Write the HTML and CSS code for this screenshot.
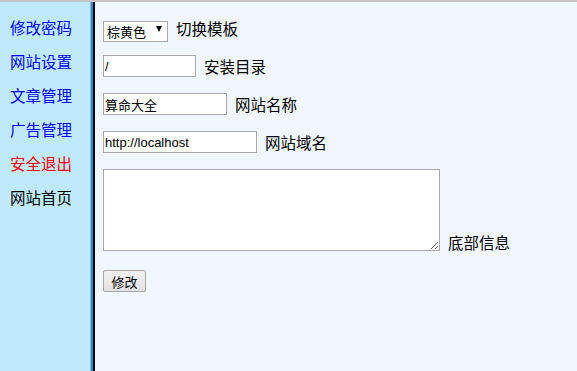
FILE: index.html
```html
<!DOCTYPE html>
<html>
<head>
<meta charset="utf-8">
<link rel="stylesheet" href="styles.css">
</head>
<body>
<div class="topline"></div>
<div class="wrap">
  <div class="side">
    <a class="nav">修改密码</a>
    <a class="nav">网站设置</a>
    <a class="nav">文章管理</a>
    <a class="nav">广告管理</a>
    <a class="nav red">安全退出</a>
    <a class="nav black">网站首页</a>
  </div>
  <div class="sep"><div class="sep-gray"></div><div class="sep-blue"></div><div class="sep-black"></div></div>
  <div class="main">
    <div class="row">
      <span class="selwrap"><select class="sel"><option>棕黄色</option></select></span>
      <span class="label">切换模板</span>
    </div>
    <div class="row">
      <input class="inp w93" value="/">
      <span class="label">安装目录</span>
    </div>
    <div class="row">
      <input class="inp w124" value="算命大全">
      <span class="label">网站名称</span>
    </div>
    <div class="row">
      <input class="inp w154" value="http://localhost">
      <span class="label">网站域名</span>
    </div>
    <div class="row area-row">
      <textarea class="area"></textarea>
      <span class="label">底部信息</span>
    </div>
    <div class="row btn-row">
      <button class="btn">修改</button>
    </div>
  </div>
</div>
</body>
</html>
```
FILE: styles.css
```css
html, body {
  margin: 0;
  padding: 0;
  height: 100%;
  overflow: hidden;
}
body {
  font-family: "Noto Sans CJK SC", "Liberation Sans", sans-serif;
  font-size: 16px;
  background: #f2f7ff;
}
.topline {
  height: 2px;
  background: #c6c6c6;
}
.wrap {
  display: flex;
  height: 369px;
}
.side {
  width: 90px;
  background: #bfeafe;
  padding-top: 8px;
  padding-left: 10px;
  box-sizing: border-box;
  display: flex;
  flex-direction: column;
}
.nav {
  display: block;
  height: 34px;
  line-height: 34px;
  color: #0000ff;
  font-size: 15.5px;
  white-space: nowrap;
}
.nav.red { color: #ff0000; }
.nav.black { color: #000000; }
.sep {
  display: flex;
}
.sep-gray { width: 1px; background: #9ab0bc; }
.sep-blue { width: 2px; background: #1b8fe8; }
.sep-black { width: 2px; background: #000000; }
.main {
  flex: 1;
  background: #f2f7ff;
  padding: 15px 0 0 8px;
  display: flex;
  flex-direction: column;
}
.row {
  display: flex;
  align-items: center;
  gap: 8px;
  height: 22px;
  margin-bottom: 16px;
}
.label {
  font-size: 15.5px;
  color: #000;
  line-height: 22px;
  white-space: nowrap;
}
.selwrap {
  position: relative;
  display: inline-block;
  width: 65px;
  height: 21px;
}
.selwrap::after {
  content: "";
  position: absolute;
  right: 6px;
  top: 8px;
  border-left: 3.5px solid transparent;
  border-right: 3.5px solid transparent;
  border-top: 6px solid #000;
  pointer-events: none;
}
.sel {
  appearance: none;
  -webkit-appearance: none;
  width: 65px;
  height: 21px;
  box-sizing: border-box;
  border: 1px solid #a9a9a9;
  background: #fff;
  font-family: "Noto Sans CJK SC", sans-serif;
  font-size: 13px;
  padding: 0 0 0 3px;
  margin: 0;
  color: #000;
  border-radius: 0;
  line-height: 19px;
}
.inp {
  height: 22px;
  box-sizing: border-box;
  border: 1px solid #a9a9a9;
  background: #fff;
  font-family: "Liberation Sans", "Noto Sans CJK SC", sans-serif;
  font-size: 13px;
  padding: 0 1px;
  margin: 0;
  color: #000;
  outline: none;
}
.w93 { width: 93px; }
.w124 { width: 124px; }
.w154 { width: 154px; }
.area-row {
  height: 82px;
  align-items: flex-end;
  margin-bottom: 19px;
}
.area-row .label { line-height: 18px; }
.area {
  width: 337px;
  height: 82px;
  box-sizing: border-box;
  border: 1px solid #a9a9a9;
  background: #fff;
  margin: 0;
  padding: 2px;
  resize: both;
}
.btn-row { height: 22px; }
.btn {
  width: 43px;
  height: 22px;
  box-sizing: border-box;
  border: 1px solid #a6a6a6;
  border-radius: 2px;
  background: linear-gradient(#f2f2f2, #e2e2e2);
  font-family: "Noto Sans CJK SC", sans-serif;
  font-size: 13px;
  padding: 0;
  margin: 0;
  color: #000;
}
```
